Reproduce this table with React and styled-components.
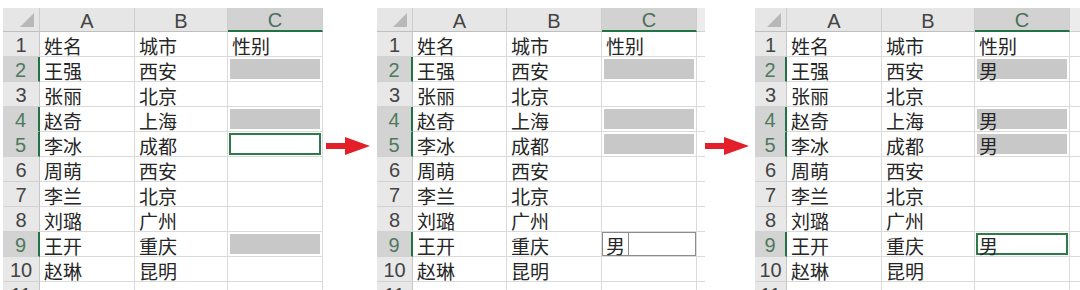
import React from 'react';
import styled, { createGlobalStyle, css } from 'styled-components';

const GlobalStyle = createGlobalStyle`
  html, body {
    margin: 0;
    padding: 0;
    background: #fff;
    overflow: hidden;
  }
`;

const Page = styled.div`
  display: flex;
  align-items: flex-start;
  padding: 8px 0 0 3px;
  height: 290px;
  box-sizing: border-box;
`;

const Sheet = styled.div`
  display: grid;
  grid-template-columns: ${(p) => p.$cols.map((c) => `${c}px`).join(' ')};
  grid-template-rows: 24px repeat(11, 25px);
  flex: none;
`;

const latin = `'Liberation Sans', Arial, sans-serif`;
const cjk = `'Noto Sans CJK SC', 'Noto Sans', sans-serif`;

const HeadCell = styled.div`
  box-sizing: border-box;
  display: flex;
  align-items: center;
  justify-content: center;
  background: #e6e6e6;
  border-right: 1px solid #cdcdcd;
  border-bottom: 1px solid #bfbfbf;
  color: #444;
  font: 20px/1 ${latin};
  padding-top: 2px;

  ${(p) =>
    p.$on &&
    css`
      background: #d2d2d2;
      border-bottom: 2px solid #217346;
      color: #4a6f57;
    `}
`;

const Corner = styled(HeadCell)`
  justify-content: flex-end;
  align-items: flex-end;
  padding: 0 5px 4px 0;
`;

const Edge = styled.div`
  box-sizing: border-box;
  background: ${(p) => (p.$head ? '#ececec' : 'transparent')};
  border-bottom: 1px solid ${(p) => (p.$head ? '#d0d0d0' : '#dadada')};
`;

const RowHead = styled.div`
  box-sizing: border-box;
  display: flex;
  align-items: center;
  justify-content: center;
  background: #e8e8e8;
  border-right: 1px solid #c6c6c6;
  border-bottom: 1px solid #d2d2d2;
  color: #444;
  font: 20px/1 ${latin};
  padding-top: 2px;

  ${(p) =>
    p.$on &&
    css`
      background: #d3d3d3;
      border-right: 2px solid #217346;
      color: #4d7a5c;
    `}
`;

const Cell = styled.div`
  box-sizing: border-box;
  display: flex;
  align-items: center;
  padding: 2px 0 0 4px;
  border-right: 1px solid #dadada;
  border-bottom: 1px solid #dadada;
  color: #262626;
  font: 19px/1 ${cjk};
  white-space: nowrap;

  ${(p) =>
    p.$mode === 'fill' &&
    css`
      background: #c8c8c8;
      box-shadow: inset 0 0 0 2px #fff;
    `}
  ${(p) =>
    p.$mode === 'active' &&
    css`
      box-shadow: inset 0 0 0 1px #fff, inset 0 0 0 3px #2f7a4b;
    `}
  ${(p) =>
    p.$mode === 'edit' &&
    css`
      padding-left: 0;
      box-shadow: inset 0 0 0 1px #8c8c8c;
    `}
`;

const Editor = styled.span`
  display: flex;
  align-items: center;
  align-self: stretch;
  margin-top: -2px;
  padding: 2px 3px 0 4px;
  border-right: 1px solid #8c8c8c;
`;

const Gap = styled.div`
  flex: none;
  width: ${(p) => p.$w}px;
  padding: 129px 0 0 ${(p) => p.$x}px;
  box-sizing: border-box;
  display: flex;
`;

const Triangle = () => (
  <svg width="14" height="14" viewBox="0 0 14 14">
    <polygon points="14,0 14,14 0,14" fill="#b8b8b8" />
  </svg>
);

const Arrow = () => (
  <svg width="44" height="18" viewBox="0 0 44 18">
    <polygon points="0,6 19,6 19,0 44,9 19,18 19,12 0,12" fill="#e3202a" />
  </svg>
);

const names = [
  ['姓名', '城市', '性别'],
  ['王强', '西安'],
  ['张丽', '北京'],
  ['赵奇', '上海'],
  ['李冰', '成都'],
  ['周萌', '西安'],
  ['李兰', '北京'],
  ['刘璐', '广州'],
  ['王开', '重庆'],
  ['赵琳', '昆明'],
  ['', ''],
];

const picked = [2, 4, 5, 9];

const panels = [
  {
    cols: [37, 95, 93, 95],
    c: { 2: ['fill'], 4: ['fill'], 5: ['active'], 9: ['fill'] },
  },
  {
    cols: [36, 94, 95, 95, 8],
    c: { 2: ['fill'], 4: ['fill'], 5: ['fill'], 9: ['edit', '男'] },
  },
  {
    cols: [32, 95, 93, 95, 10],
    c: {
      2: ['fill', '男'],
      4: ['fill', '男'],
      5: ['fill', '男'],
      9: ['active', '男'],
    },
  },
];

function SheetView({ cols, c }) {
  const extra = cols.length > 4;
  return (
    <Sheet $cols={cols}>
      <Corner>
        <Triangle />
      </Corner>
      <HeadCell>A</HeadCell>
      <HeadCell>B</HeadCell>
      <HeadCell $on>C</HeadCell>
      {extra && <Edge $head />}
      {names.map((row, i) => {
        const n = i + 1;
        const [mode, val] = n === 1 ? [null, row[2]] : c[n] || [];
        return (
          <React.Fragment key={n}>
            <RowHead $on={picked.includes(n)}>{n}</RowHead>
            <Cell>{row[0]}</Cell>
            <Cell>{row[1]}</Cell>
            <Cell $mode={mode}>
              {mode === 'edit' ? <Editor>{val}</Editor> : val}
            </Cell>
            {extra && <Edge />}
          </React.Fragment>
        );
      })}
    </Sheet>
  );
}

export default function App() {
  return (
    <>
      <GlobalStyle />
      <Page>
        <SheetView {...panels[0]} />
        <Gap $w={54} $x={3}>
          <Arrow />
        </Gap>
        <SheetView {...panels[1]} />
        <Gap $w={50} $x={0}>
          <Arrow />
        </Gap>
        <SheetView {...panels[2]} />
      </Page>
    </>
  );
}
